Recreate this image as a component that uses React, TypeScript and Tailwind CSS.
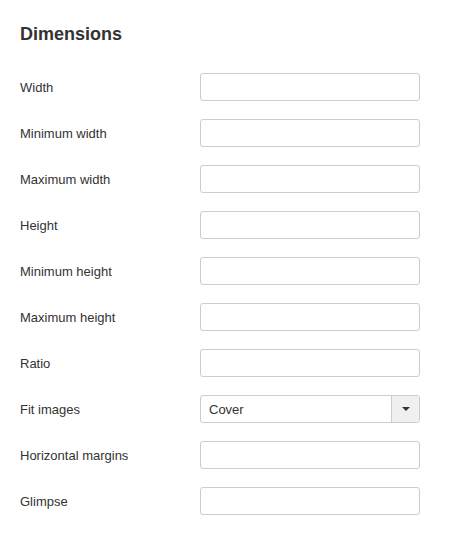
import React from "react";

const rows = [
  "Width",
  "Minimum width",
  "Maximum width",
  "Height",
  "Minimum height",
  "Maximum height",
  "Ratio",
  "Fit images",
  "Horizontal margins",
  "Glimpse",
];

export default function App() {
  return (
    <div
      className="w-[466px] h-[538px] bg-white pl-5 pt-5 text-[#333]"
      style={{ fontFamily: '"Liberation Sans", Arial, sans-serif' }}
    >
      <h2 className="text-[18px] leading-[26px] font-bold pt-[1px]">Dimensions</h2>
      <div className="mt-[26px] flex flex-col gap-[18px]">
        {rows.map((r) => (
          <div key={r} className="flex items-center h-[28px]">
            <div className="w-[180px] text-[13px] pt-[2px]">{r}</div>
            {r === "Fit images" ? (
              <div className="w-[220px] h-[28px] border border-[#ccc] rounded-[3px] flex items-stretch">
                <div className="flex-1 flex items-center pl-2 pt-[1px] text-[13px]">Cover</div>
                <div className="w-[28px] border-l border-[#ccc] bg-[#f0f0f0] flex items-center justify-center rounded-r-[3px]">
                  <div className="w-0 h-0 border-l-[4px] border-r-[4px] border-t-[4px] border-l-transparent border-r-transparent border-t-[#333]" />
                </div>
              </div>
            ) : (
              <div className="w-[220px] h-[28px] border border-[#ccc] rounded-[3px]" />
            )}
          </div>
        ))}
      </div>
    </div>
  );
}
